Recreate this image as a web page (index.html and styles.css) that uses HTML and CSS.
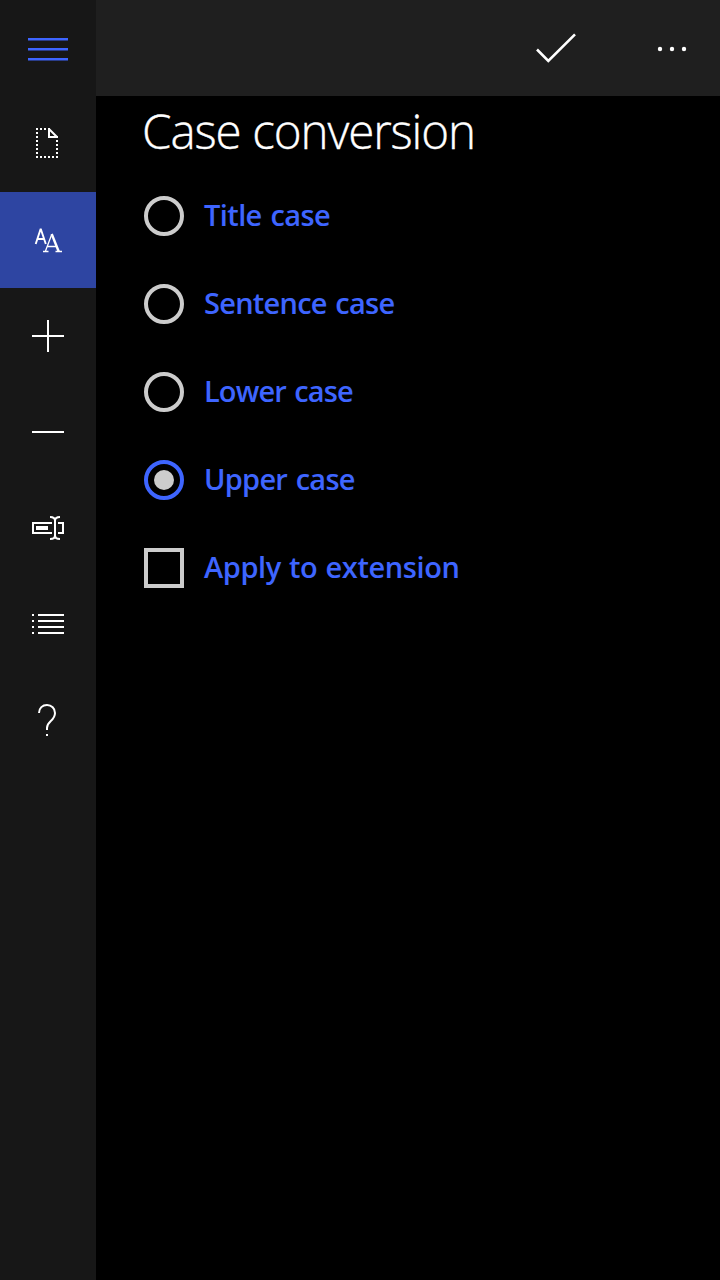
FILE: index.html
```
<!DOCTYPE html>
<html lang="en">
<head>
<meta charset="utf-8">
<title>Case conversion</title>
<link rel="stylesheet" href="styles.css">
</head>
<body>
<div class="app">
  <nav class="rail">
    <button class="rail-item menu" aria-label="Menu">
      <svg class="icon" viewBox="0 0 96 96"><path fill="currentColor" d="M28 38h40v2.4H28zM28 48h40v2.4H28zM28 58h40v2.4H28z"/></svg>
    </button>
    <button class="rail-item" aria-label="New name">
      <svg class="icon" viewBox="0 0 96 96" fill="none" stroke="currentColor" stroke-width="2">
        <path stroke-dasharray="2 2" d="M36 33H48M37 36V62M36 61H58M57 44V60"/>
        <path d="M49 32V41H58M49 33L57 41"/>
      </svg>
    </button>
    <button class="rail-item active" aria-label="Case">
      <svg class="icon" viewBox="0 0 96 96" fill="none" stroke="currentColor">
        <path stroke-width="1.9" stroke-linejoin="bevel" d="M35.700 52L40.700 36.800L45.800 52M37.300 47H44.200"/>
        <path stroke-width="1.3" stroke-linejoin="bevel" d="M45.300 59.500L51.700 42.500M47.300 54.500H56M43 59.500H48.500M55.500 59.500H62"/>
        <path stroke-width="2.4" d="M51.700 42L58.700 59.500"/>
      </svg>
    </button>
    <button class="rail-item" aria-label="Add">
      <svg class="icon" viewBox="0 0 96 96" stroke="currentColor" stroke-width="2"><path d="M32 48H64M48 32V64"/></svg>
    </button>
    <button class="rail-item" aria-label="Remove">
      <svg class="icon" viewBox="0 0 96 96" stroke="currentColor" stroke-width="2"><path d="M32 48H64"/></svg>
    </button>
    <button class="rail-item" aria-label="Rename">
      <svg class="icon" viewBox="0 0 96 96" fill="none" stroke="currentColor" stroke-width="2">
        <path d="M52 43H33V53H52M58 43H63V53H58"/>
        <path stroke-width="4" d="M36 48H48"/>
        <path d="M50 37Q55 37 55 40.500V55.500Q55 59 50 59M60 37Q55 37 55 40.500M55 55.500Q55 59 60 59"/>
      </svg>
    </button>
    <button class="rail-item" aria-label="List">
      <svg class="icon" viewBox="0 0 96 96" stroke="currentColor" stroke-width="2"><path d="M32 39h2M38 39H64M32 45h2M38 45H64M32 51h2M38 51H64M32 57h2M38 57H64"/></svg>
    </button>
    <button class="rail-item" aria-label="Help">
      <svg class="icon" viewBox="0 0 96 96" fill="none" stroke="currentColor" stroke-width="2"><path d="M39 41C39 36 42.5 33 47 33S55 36.500 55 41C55 49 47 49 47 56V58M46 63h2"/></svg>
    </button>
  </nav>
  <div class="page">
    <header class="commands">
      <button class="command" aria-label="Accept">
        <svg class="icon" viewBox="0 0 96 96" fill="none" stroke="currentColor" stroke-width="2.6"><path d="M17 49.500L28.300 60.800L55 34.300"/></svg>
      </button>
      <button class="command" aria-label="More">
        <svg class="icon" viewBox="0 0 96 96" fill="currentColor"><circle cx="36" cy="49" r="2.200"/><circle cx="48" cy="49" r="2.200"/><circle cx="60" cy="49" r="2.200"/></svg>
      </button>
    </header>
    <main class="content">
      <h1 class="title">Case conversion</h1>
      <div class="options">
        <label class="option"><span class="radio"></span><span class="text title-case">Title case</span></label>
        <label class="option"><span class="radio"></span><span class="text sentence-case">Sentence case</span></label>
        <label class="option"><span class="radio"></span><span class="text lower-case">Lower case</span></label>
        <label class="option"><span class="radio checked"></span><span class="text upper-case">Upper case</span></label>
        <label class="option"><span class="checkbox"></span><span class="text extension">Apply to extension</span></label>
      </div>
    </main>
  </div>
</div>
</body>
</html>
```
FILE: styles.css
```
* { box-sizing: border-box; }
body {
  margin: 0;
  background: #000;
  color: #fff;
  font-family: "Open Sans", "Noto Sans", sans-serif;
}
.app { display: flex; width: 720px; height: 1280px; }
.rail { width: 96px; background: #171717; }
.rail-item, .command {
  display: block;
  width: 96px;
  height: 96px;
  padding: 0;
  border: 0;
  background: none;
  color: #fff;
}
.menu { color: #3e65ff; }
.active { background: #2e45a2; }
.icon { display: block; width: 96px; height: 96px; }
.page { flex: 1; }
.commands {
  display: flex;
  justify-content: flex-end;
  gap: 8px;
  height: 96px;
  background: #1f1f1f;
}
.content { padding: 0 48px; }
.title {
  margin: 0 0 0 -2px;
  height: 76px;
  font-size: 47.5px;
  font-weight: 300;
  letter-spacing: -1.1px;
  word-spacing: 0.6px;
  line-height: 70px;
  white-space: nowrap;
  -webkit-text-stroke: 0.35px #fff;
}
.option {
  display: flex;
  align-items: center;
  gap: 20px;
  height: 88px;
}
.radio, .checkbox {
  display: flex;
  width: 40px;
  height: 40px;
  border: 4px solid #ccc;
}
.radio { border-radius: 50%; }
.checked { align-items: center; justify-content: center; border-color: #3e65ff; }
.checked::after {
  content: "";
  width: 20px;
  height: 20px;
  border-radius: 50%;
  background: #ccc;
}
.text {
  padding-bottom: 2px;
  color: #3e65ff;
  font-size: 29px;
  font-weight: 600;
  line-height: 40px;
  white-space: nowrap;
}
.title-case { letter-spacing: -0.6px; word-spacing: 1.8px; }
.sentence-case { letter-spacing: -0.75px; word-spacing: 1.8px; }
.lower-case { letter-spacing: -0.9px; word-spacing: 1.8px; }
.upper-case { letter-spacing: -0.75px; word-spacing: 1.8px; }
.extension { letter-spacing: -0.4px; word-spacing: 1px; }
```
